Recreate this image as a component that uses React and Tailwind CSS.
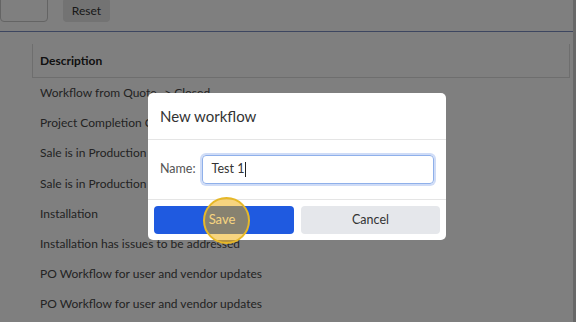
import React from 'react';

const rows = [
    'Workflow from Quote -> Closed',
    'Project Completion Closed',
    'Sale is in Production',
    'Sale is in Production',
    'Installation',
    'Installation has issues to be addressed',
    'PO Workflow for user and vendor updates',
    'PO Workflow for user and vendor updates',
];

const App = () => {
    return (
        <div className="relative w-[576px] h-[322px] overflow-hidden bg-white text-[12px] text-[#474747]" style={{ fontFamily: 'Lato, "Open Sans", sans-serif' }}>
            {/* Filter bar */}
            <div className="h-[32px] border-b border-[#7a8cc0] flex items-start gap-[15px]">
                <div className="w-[48px] h-[24px] -mt-[2px] border border-[#c8c8c8] rounded-b-[4px] bg-white" />
                <button className="w-[47px] h-[24px] -mt-[2px] pt-[2px] bg-[#e6e6e6] rounded-[4px] text-[#333]">Reset</button>
            </div>

            {/* Table */}
            <div className="mt-[12px] ml-[32px] mr-[6px]">
                <div className="h-[34px] flex items-center px-[7px] border-l border-r border-b border-[#dcdcdc] font-bold text-[#222]">
                    Description
                </div>
                {rows.map((r, i) => (
                    <div key={i} className="h-[30.2px] flex items-center px-[8px] whitespace-nowrap">
                        {r}
                    </div>
                ))}
            </div>
            <div className="absolute top-0 right-0 w-[3px] h-full bg-[#d0d0d0]" />

            {/* Overlay */}
            <div className="absolute inset-0 bg-black/50" />

            {/* Modal */}
            <div className="absolute left-[148px] top-[93px] w-[298px] bg-white rounded-[5px]">
                <div className="h-[47px] flex items-center px-[12px] border-b border-[#e5e5e5] text-[15px] text-[#333]">
                    New workflow
                </div>
                <div className="h-[60px] flex items-center px-[12px] gap-[6px] border-b border-[#e5e5e5]">
                    <span className="text-[12.5px] text-[#555]">Name:</span>
                    <div className="flex-1 h-[29px] flex items-center px-[9px] border border-[#8fb0ea] rounded-[4px] ring-[2px] ring-[#cfdcf7] text-[12.5px] text-[#333]">
                        Test 1<span className="w-px h-[15px] bg-[#222] ml-[1px]" />
                    </div>
                </div>
                <div className="flex gap-[7px] px-[6px] py-[6px]">
                    <button className="w-[140px] h-[28px] rounded-[4px] bg-[#1f5ae0] text-white text-[13px] pr-[4px]">Save</button>
                    <button className="w-[139px] h-[28px] rounded-[4px] bg-[#e5e7eb] text-[#333] text-[12.5px]">Cancel</button>
                </div>
            </div>

            {/* Click highlight */}
            <div className="absolute left-[203px] top-[197px] w-[47px] h-[47px] rounded-full border-[2px] border-[#e6b828] bg-[rgba(239,170,0,0.5)] pointer-events-none" />
        </div>
    );
};

export default App;
